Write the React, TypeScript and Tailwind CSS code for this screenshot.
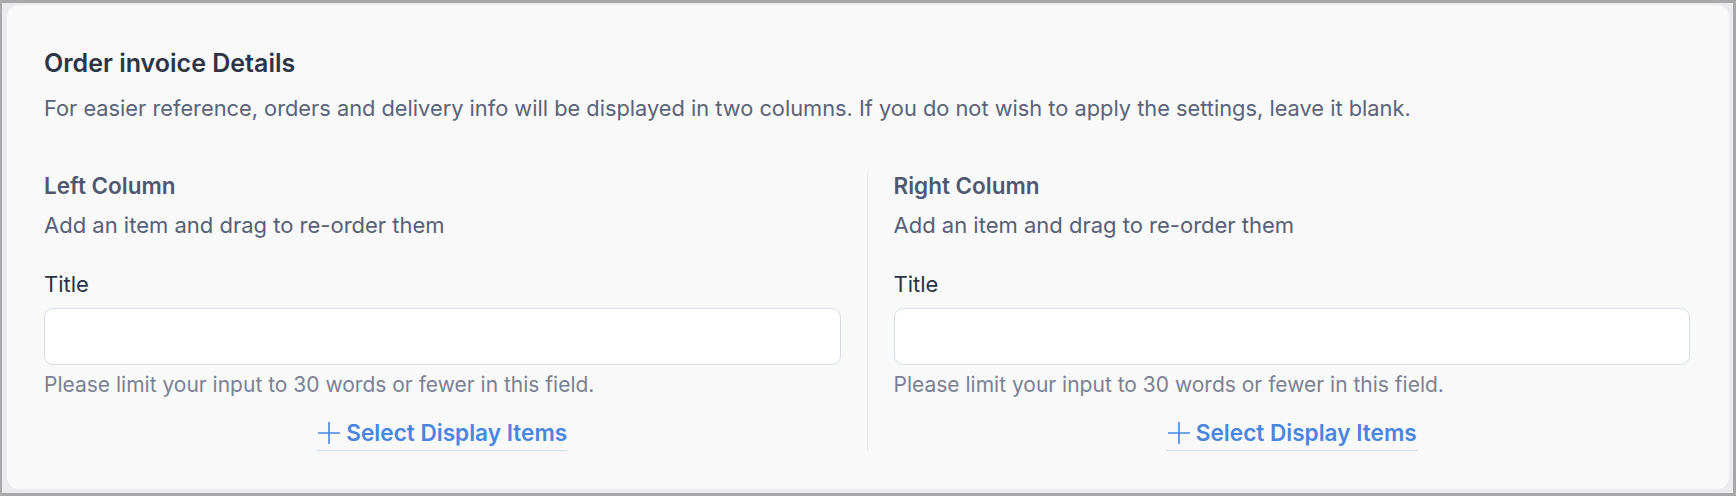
import { useState } from 'react'

type ColumnProps = {
  heading: string
}

function PlusIcon() {
  return (
    <svg viewBox="0 0 24 24" className="h-[24px] w-[24px]" fill="none" stroke="currentColor" strokeWidth={1.6}>
      <path d="M12 1v22M1 12h22" />
    </svg>
  )
}

function DisplayColumn({ heading }: ColumnProps) {
  const [title, setTitle] = useState('')

  return (
    <div className="flex flex-col">
      <h3 className="text-[22.5px] leading-[30px] font-semibold text-[#4f5870]">{heading}</h3>
      <p className="mt-[9px] text-[22px] leading-[30px] text-[#566076]">Add an item and drag to re-order them</p>

      <label className="mt-[29px] text-[22px] leading-[30px] text-[#2c3342]">Title</label>
      <input
        value={title}
        onChange={(e) => setTitle(e.target.value)}
        className="mt-[9px] h-[57px] w-full rounded-[9px] border border-[#d6dde7] bg-white px-4 text-[20px] outline-none"
      />
      <p className="mt-[6px] text-[21px] leading-[28px] text-[#7a8193]">
        Please limit your input to 30 words or fewer in this field.
      </p>

      <div className="mt-[19px] flex justify-center">
        <button className="flex items-center gap-[5px] border-b border-[#c9dcf4] pb-[2px] text-[22.6px] leading-[30px] font-semibold text-[#4a85e0]">
          <PlusIcon />
          Select Display Items
        </button>
      </div>
    </div>
  )
}

export default function App() {
  return (
    <div className="w-[1736px] h-[496px] border-t-[3px] border-l-[2px] border-r-[3px] border-b-[3px] border-[#a8a8a8] bg-[#ebebed] pl-[5px] pt-[2px] pr-[4px] pb-[4px] font-['Inter',sans-serif]">
      <div className="h-full rounded-[12px] bg-[#f9f9fa] pl-[37px] pr-[39px] pt-[42px]">
        <h2 className="text-[25px] leading-[32px] font-semibold text-[#2d3445]">Order invoice Details</h2>
        <p className="mt-[14px] text-[21.8px] leading-[30px] text-[#596379]">
          For easier reference, orders and delivery info will be displayed in two columns. If you do not wish to apply the settings, leave it blank.
        </p>

        <div className="mt-[48px] grid grid-cols-[1fr_1px_1fr] gap-x-[26px]">
          <DisplayColumn heading="Left Column" />
          <div className="bg-[#e6e7ea]" />
          <DisplayColumn heading="Right Column" />
        </div>
      </div>
    </div>
  )
}
